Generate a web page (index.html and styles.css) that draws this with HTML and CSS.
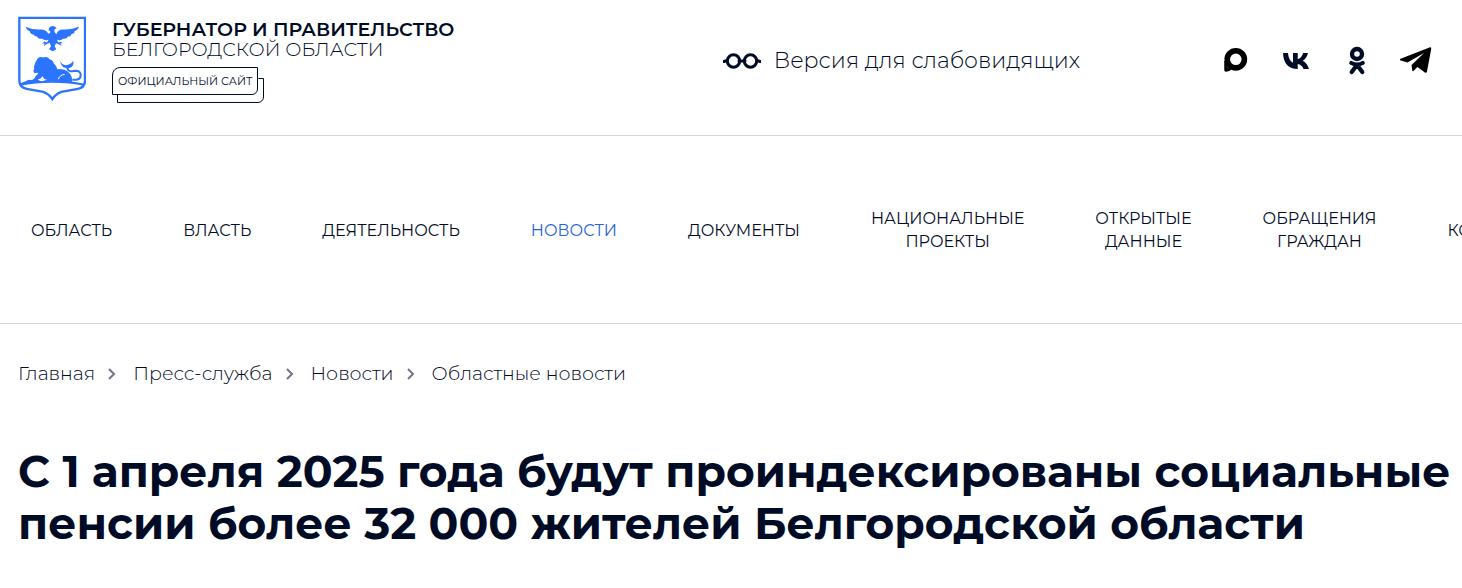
FILE: index.html
```html
<!DOCTYPE html>
<html lang="ru">
<head>
<meta charset="utf-8">
<meta name="viewport" content="width=device-width, initial-scale=1">
<title>С 1 апреля 2025 года будут проиндексированы социальные пенсии</title>
<link rel="stylesheet" href="styles.css">
</head>
<body>
<header class="header">
  <a class="brand" href="#">
    <svg class="emblem" viewBox="24 26 204 255" aria-hidden="true">
      <path d="M28 30H225V218Q225 239 204 243L154 252Q136 259 127 274Q118 259 100 252L50 243Q28 239 28 218Z" fill="none" stroke="#2b74ff" stroke-width="7"/>
      <path fill="#2b74ff" d="M46 57Q65 66 91 65Q107 64 114 76Q121 80 121 70Q112 68 119 58Q128 51 135 57L140 61L133 65Q132 75 139 79Q144 65 158 65Q187 66 207 56Q204 67 193 70Q197 75 184 79Q183 86 174 86Q171 94 160 93Q153 99 141 96L145 104Q154 100 158 106L151 106L155 114L147 110L138 106L134 115L139 124L128 130L117 124L123 115L119 105L109 109L101 115L104 107L97 107L103 101L111 104L116 96Q102 99 97 93Q84 94 81 86Q72 86 71 80Q60 79 60 71Q50 67 46 57Z"/>
      <path fill="#2b74ff" d="M32 226Q48 220 57 216Q67 218 73 212Q77 203 85 197Q81 193 73 196L70 188Q74 184 72 176Q76 161 83 152Q90 145 101 149Q112 145 119 154Q130 157 131 166Q142 176 141 184Q162 182 174 192Q188 203 186 221Q204 223 222 228L222 234Q180 225 127 225Q73 225 32 234ZM83 216Q90 220 96 220L112 216Q101 214 98 205Q94 211 83 216Z"/>
      <path d="M145 214Q150 200 164 200" fill="none" stroke="#fff" stroke-width="3"/>
      <path d="M173 177Q170 187 181 190Q189 191 197 189Q210 189 212 200Q213 214 198 216H187" fill="none" stroke="#2b74ff" stroke-width="6"/>
      <path d="M150 160Q155 170 166 172Q180 173 190 159Q193 178 176 181Q154 182 150 160Z" fill="#2b74ff"/>
    </svg>
    <span class="brand-text">
      <span class="brand-title">ГУБЕРНАТОР И ПРАВИТЕЛЬСТВО</span>
      <span class="brand-region">БЕЛГОРОДСКОЙ ОБЛАСТИ</span>
      <span class="official">ОФИЦИАЛЬНЫЙ САЙТ</span>
    </span>
  </a>
  <a class="vision" href="#">
    <svg class="glasses" viewBox="0 0 38 18" aria-hidden="true"><g fill="none" stroke="#000b26" stroke-width="3"><circle cx="10.500" cy="9" r="6.200"/><circle cx="27.500" cy="9" r="6.200"/><path d="M16 9H22M1 9.500L4 8.500M37 9.500L34 8.500" stroke-linecap="round"/></g></svg>
    <span>Версия для слабовидящих</span>
  </a>
  <div class="socials">
    <a href="#" aria-label="MAX"><svg viewBox="0 0 32 32"><path d="M6 17V26Q9 26 10.500 24" fill="none" stroke="#000" stroke-width="3.500" stroke-linejoin="round"/><circle cx="15.800" cy="15.300" r="8.600" fill="none" stroke="#000" stroke-width="5.600"/><path d="M9 15V23L14 21.500L10.800 19.500Z"/></svg></a>
    <a href="#" aria-label="ВКонтакте"><svg viewBox="0 0 32 32"><path fill="#000b26" d="M3 9H8Q8.500 16.500 13 18.800V9H17.700V15Q21.500 14.500 23.200 9H28Q26.500 14.500 22.700 16.800Q26.800 18.700 29 25H23.500Q22 20.800 17.700 20V25Q3.800 25 3 9Z"/></svg></a>
    <a href="#" aria-label="Одноклассники"><svg viewBox="0 0 32 32"><circle cx="17" cy="10" r="5" fill="none" stroke="#000b26" stroke-width="4.400"/><path d="M11.300 19Q17 22 22.700 19M17 21L11.700 28M17 21L22.300 28" fill="none" stroke="#000b26" stroke-width="4.200" stroke-linecap="round"/></svg></a>
    <a href="#" aria-label="Telegram"><svg viewBox="0 0 32 32"><path fill="#000" d="M0 15L30 3.200Q31.500 3 31.200 5L27 27.500Q26.600 29.500 24.500 28.200L17.500 23L13.500 27Q12.500 27.800 12.300 26.500L11.500 21L24 9L7.500 18.500L0 16.300Z"/></svg></a>
  </div>
</header>
<nav class="nav" aria-label="Основное меню">
  <a href="#">ОБЛАСТЬ</a>
  <a href="#">ВЛАСТЬ</a>
  <a href="#">ДЕЯТЕЛЬНОСТЬ</a>
  <a class="active" href="#">НОВОСТИ</a>
  <a href="#">ДОКУМЕНТЫ</a>
  <a href="#">НАЦИОНАЛЬНЫЕ<br>ПРОЕКТЫ</a>
  <a href="#">ОТКРЫТЫЕ<br>ДАННЫЕ</a>
  <a href="#">ОБРАЩЕНИЯ<br>ГРАЖДАН</a>
  <a href="#">КОНТАКТЫ</a>
</nav>
<main class="content">
  <nav class="crumbs" aria-label="Навигационная цепочка">
    <a href="#">Главная</a>
    <svg viewBox="0 0 8 12" aria-hidden="true"><path d="M1 1L6 6L1 11"/></svg>
    <a href="#">Пресс-служба</a>
    <svg viewBox="0 0 8 12" aria-hidden="true"><path d="M1 1L6 6L1 11"/></svg>
    <a href="#">Новости</a>
    <svg viewBox="0 0 8 12" aria-hidden="true"><path d="M1 1L6 6L1 11"/></svg>
    <a href="#">Областные новости</a>
  </nav>
  <h1>С 1 апреля 2025 года будут проиндексированы социальные пенсии более 32 000 жителей Белгородской области</h1>
</main>
</body>
</html>
```
FILE: styles.css
```css
* { box-sizing: border-box; }
body {
  margin: 0;
  overflow-x: hidden;
  background: #fff;
  color: #000b26;
  font-family: Montserrat, Inter, sans-serif;
}
a { color: inherit; text-decoration: none; }
.header {
  display: flex;
  align-items: flex-start;
  padding: 16px 30px 33px 18px;
  border-bottom: 1px solid #d3d4d8;
}
.brand { display: flex; flex: 1; gap: 26px; }
.emblem { width: 68px; height: 86px; }
.brand-text {
  display: flex;
  flex-direction: column;
  align-items: flex-start;
  padding-top: 3px;
  white-space: nowrap;
}
.brand-title { font-size: 19px; line-height: 21px; font-weight: 600; }
.brand-region { font-size: 19px; line-height: 20px; font-weight: 300; }
.official {
  position: relative;
  margin-top: 7px;
  padding: 0 5px;
  border: 1px solid #000b26;
  border-radius: 8px 0 6px 0;
  font-size: 11px;
  line-height: 26px;
}
.official::after {
  content: "";
  position: absolute;
  inset: 10px -7px -9px 4px;
  z-index: -1;
  border: 1px solid #000b26;
  border-radius: 0 0 6px 0;
  clip-path: polygon(0 17px, calc(100% - 6px) 17px, calc(100% - 6px) 0, 100% 0, 100% 100%, 0 100%);
}
.vision {
  display: flex;
  align-items: center;
  gap: 13px;
  margin-top: 31px;
  font-size: 22px;
  line-height: 28px;
  font-weight: 300;
  white-space: nowrap;
}
.glasses { width: 38px; height: 18px; }
.socials { display: flex; gap: 28px; margin: 28px 0 0 140px; }
.socials a, .socials svg { display: block; width: 32px; height: 32px; }
.nav {
  display: flex;
  align-items: center;
  gap: 71px;
  padding: 71px 31px 70px;
  overflow: hidden;
  border-bottom: 1px solid #d3d4d8;
  font-size: 16px;
  line-height: 23px;
  text-align: center;
  white-space: nowrap;
}
.nav .active { color: #2563d9; }
.content { padding: 38px 0 38px 18px; }
.crumbs {
  display: flex;
  align-items: center;
  gap: 13px;
  font-size: 19px;
  line-height: 24px;
  font-weight: 300;
}
.crumbs svg {
  width: 8px;
  height: 12px;
  margin-right: 4px;
  fill: none;
  stroke: #70758a;
  stroke-width: 2;
}
h1 {
  margin: 59px 0 0;
  font-size: 44px;
  line-height: 52px;
  font-weight: 700;
}
```
